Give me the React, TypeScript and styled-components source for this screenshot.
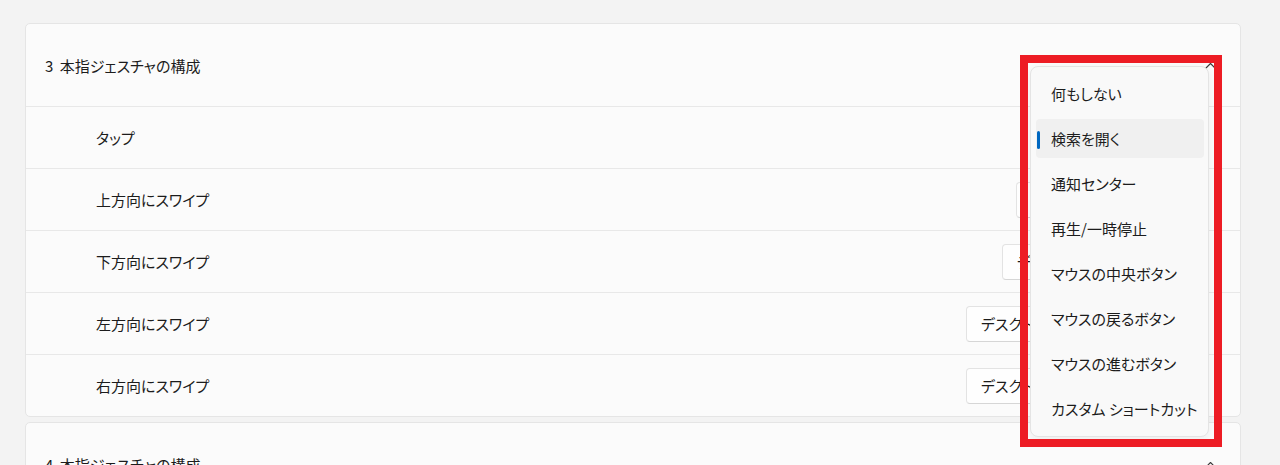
import styled, { createGlobalStyle } from 'styled-components';

const GlobalStyle = createGlobalStyle`
  html, body {
    margin: 0;
    padding: 0;
    background: #f3f3f3;
    overflow: hidden;
  }
  body {
    font-family: "Noto Sans CJK JP", "Noto Sans", sans-serif;
    font-size: 15px;
    font-feature-settings: "palt";
    color: #1c1c1c;
  }
`;

const Page = styled.div`
  position: relative;
  width: 1280px;
  height: 465px;
  box-sizing: border-box;
  padding: 23px 39px 0 25px;
  display: flex;
  flex-direction: column;
  gap: 5px;
  overflow: hidden;
`;

const Card = styled.section`
  background: #fbfbfb;
  border: 1px solid #e5e5e5;
  border-radius: 5px;
  display: flex;
  flex-direction: column;
  flex-shrink: 0;
`;

const Header = styled.div`
  height: 82px;
  display: flex;
  align-items: center;
  justify-content: space-between;
  padding: 0 24px 0 19px;
`;

const Title = styled.span`
  white-space: pre;
  word-spacing: 3px;
`;

const Row = styled.div`
  height: 61px;
  border-top: 1px solid #e8e8e8;
  display: flex;
  align-items: center;
  justify-content: space-between;
  padding: 0 48px 0 70px;
`;

const Label = styled.span``;

const Combo = styled.div<{ $width: number }>`
  width: ${({ $width }) => $width}px;
  height: 36px;
  box-sizing: border-box;
  background: #fefefe;
  border: 1px solid #e3e3e3;
  border-bottom-color: #d6d6d6;
  border-radius: 4px;
  display: flex;
  align-items: center;
  gap: 8px;
  padding: 0 12px 0 14px;
`;

const ComboText = styled.span`
  flex: 1;
  min-width: 0;
  overflow: hidden;
  white-space: nowrap;
`;

const Menu = styled.ul`
  position: absolute;
  left: 1030px;
  top: 66px;
  width: 179px;
  margin: 0;
  padding: 7px 4px 8px 5px;
  box-sizing: border-box;
  list-style: none;
  background: #f9f9f9;
  border: 1px solid #e4e4e4;
  border-radius: 8px;
  box-shadow: 0 3px 8px rgba(0, 0, 0, 0.06);
  display: flex;
  flex-direction: column;
  gap: 6px;
`;

const Item = styled.li<{ $selected?: boolean }>`
  position: relative;
  height: 39px;
  display: flex;
  align-items: center;
  padding-left: 15px;
  border-radius: 4px;
  background: ${({ $selected }) => ($selected ? '#f0f0f0' : 'transparent')};
  white-space: nowrap;

  &::before {
    content: '';
    display: ${({ $selected }) => ($selected ? 'block' : 'none')};
    position: absolute;
    left: 1px;
    top: 12px;
    width: 3px;
    height: 18px;
    border-radius: 2px;
    background: #0067c0;
  }
`;

const Highlight = styled.div`
  position: absolute;
  left: 1020px;
  top: 55px;
  width: 202px;
  height: 392px;
  box-sizing: border-box;
  border: 8px solid #ed1c24;
  pointer-events: none;
`;

const Chevron = ({ up }: { up?: boolean }) => (
  <svg width="11" height="7" viewBox="0 0 11 7" fill="none">
    <path
      d={up ? 'M1 6L5.5 1.5L10 6' : 'M1 1L5.5 5.5L10 1'}
      stroke="#3a3a3a"
      strokeWidth="1.1"
      strokeLinecap="round"
      strokeLinejoin="round"
    />
  </svg>
);

const rows = [
  { label: 'タップ', value: '検索を開く', width: 150 },
  { label: '上方向にスワイプ', value: 'タスク ビュー', width: 176 },
  { label: '下方向にスワイプ', value: 'デスクトップ', width: 190 },
  { label: '左方向にスワイプ', value: 'デスクトップの切り替え', width: 226 },
  { label: '右方向にスワイプ', value: 'デスクトップの切り替え', width: 226 },
];

const options = [
  '何もしない',
  '検索を開く',
  '通知センター',
  '再生/一時停止',
  'マウスの中央ボタン',
  'マウスの戻るボタン',
  'マウスの進むボタン',
  'カスタム ショートカット',
];

export default function App() {
  return (
    <>
      <GlobalStyle />
      <Page>
        <Card>
          <Header>
            <Title>3 本指ジェスチャの構成</Title>
            <Chevron up />
          </Header>
          {rows.map((row) => (
            <Row key={row.label}>
              <Label>{row.label}</Label>
              <Combo $width={row.width}>
                <ComboText>{row.value}</ComboText>
                <Chevron />
              </Combo>
            </Row>
          ))}
        </Card>
        <Card>
          <Header>
            <Title>4 本指ジェスチャの構成</Title>
            <Chevron up />
          </Header>
        </Card>
        <Menu>
          {options.map((opt) => (
            <Item key={opt} $selected={opt === '検索を開く'}>
              {opt}
            </Item>
          ))}
        </Menu>
        <Highlight />
      </Page>
    </>
  );
}
